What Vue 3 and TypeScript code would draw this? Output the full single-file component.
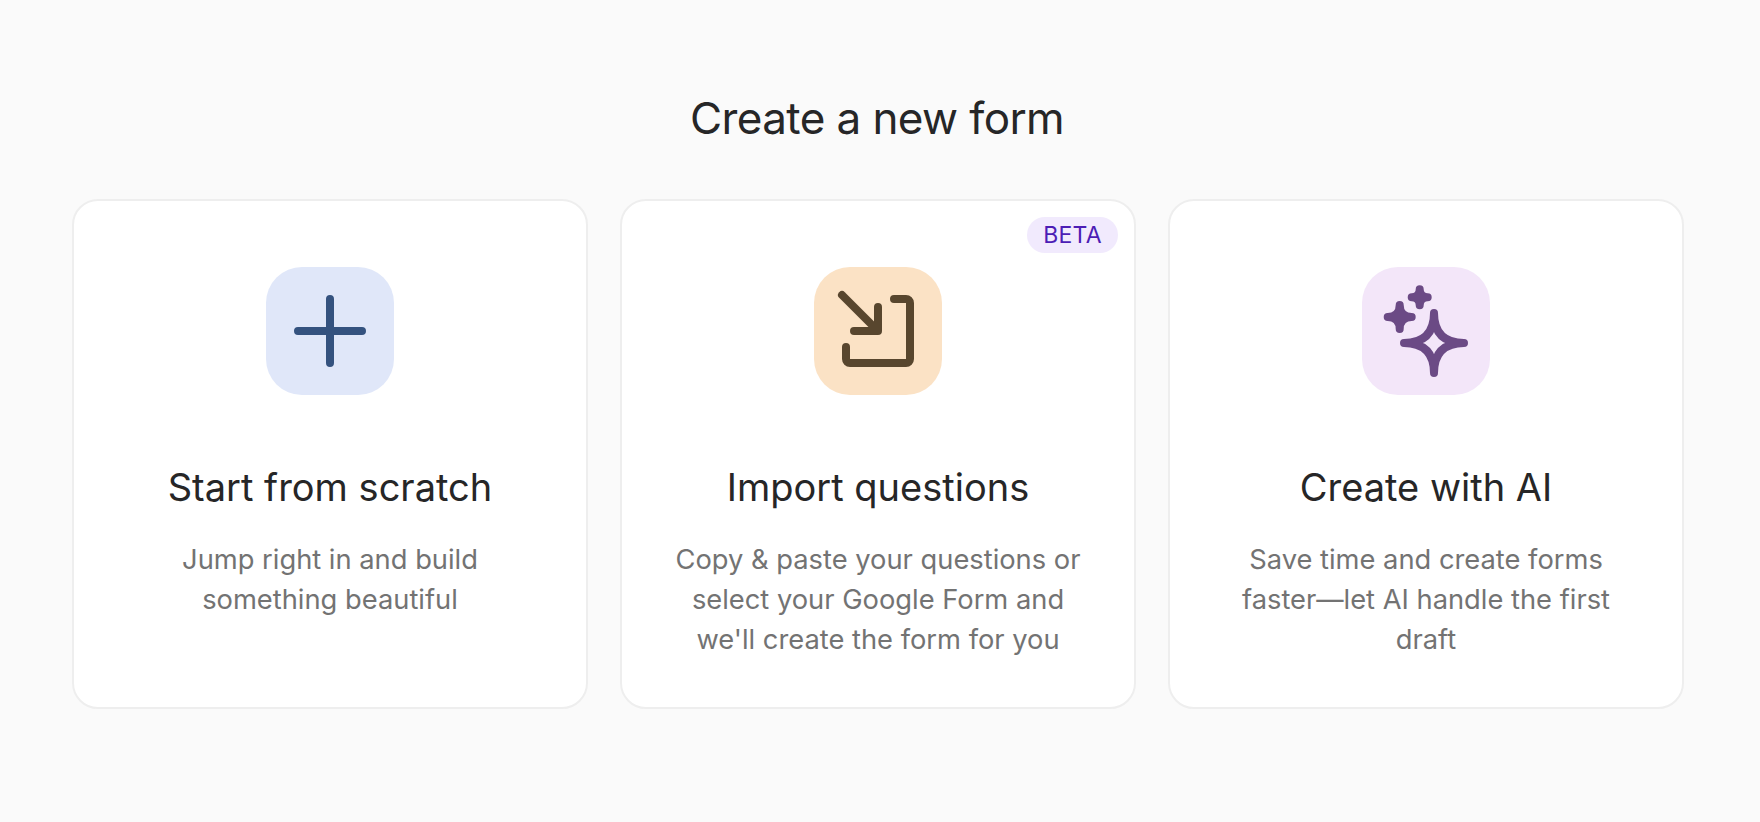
<script setup lang="ts">
interface Option {
  key: string
  title: string
  lines: string[]
  tone: string
  beta?: boolean
}

const options: Option[] = [
  { key: 'scratch', title: 'Start from scratch', lines: ['Jump right in and build', 'something beautiful'], tone: 'blue' },
  {
    key: 'import',
    title: 'Import questions',
    lines: ['Copy & paste your questions or', 'select your Google Form and', "we'll create the form for you"],
    tone: 'orange',
    beta: true,
  },
  { key: 'ai', title: 'Create with AI', lines: ['Save time and create forms', 'faster—let AI handle the first', 'draft'], tone: 'purple' },
]
</script>

<template>
  <main class="page">
    <h1 class="heading">Create a new form</h1>
    <section class="cards">
      <article v-for="o in options" :key="o.key" class="card">
        <span v-if="o.beta" class="badge">BETA</span>
        <div class="tile" :class="o.tone">
          <svg v-if="o.key === 'scratch'" viewBox="0 0 128 128" class="glyph" fill="none" stroke="currentColor" stroke-width="8" stroke-linecap="round">
            <path d="M32 64H96M64 32V96" />
          </svg>
          <svg v-else-if="o.key === 'import'" viewBox="0 0 128 128" class="glyph" fill="none" stroke="currentColor" stroke-width="8" stroke-linecap="round" stroke-linejoin="round">
            <path d="M28 28L62 62" />
            <path d="M64 40V64H40" />
            <path d="M80 32H92a4 4 0 0 1 4 4V92a4 4 0 0 1-4 4H36a4 4 0 0 1-4-4V80" />
          </svg>
          <svg v-else viewBox="0 0 128 128" class="glyph" stroke="currentColor" stroke-width="8" stroke-linecap="round" stroke-linejoin="round">
            <path fill="none" d="M72 46C72 66 82 76 102 76C82 76 72 86 72 106C72 86 62 76 42 76C62 76 72 66 72 46Z" />
            <path fill="currentColor" d="M37.7 38C37.7 46 41.7 50 49.7 50C41.7 50 37.7 54 37.7 62C37.7 54 33.7 50 25.7 50C33.7 50 37.7 46 37.7 38Z" />
            <path fill="currentColor" d="M57.7 22.3C57.7 27.5 60.5 30.3 65.7 30.3C60.5 30.3 57.7 33.1 57.7 38.3C57.7 33.1 54.9 30.3 49.7 30.3C54.9 30.3 57.7 27.5 57.7 22.3Z" />
          </svg>
        </div>
        <h2 class="title">{{ o.title }}</h2>
        <p class="desc">
          <span v-for="line in o.lines" :key="line" class="line">{{ line }}</span>
        </p>
      </article>
    </section>
  </main>
</template>

<style>
html,
body {
  margin: 0;
  background: #fafafa;
}
</style>

<style scoped>
.page {
  box-sizing: border-box;
  min-height: 822px;
  padding: 94px 76px 0 72px;
  background: #fafafa;
  font-family: Inter, "Liberation Sans", sans-serif;
}

.heading {
  margin: 0 0 57px;
  padding-right: 2px;
  height: 48px;
  line-height: 48px;
  font-size: 44px;
  letter-spacing: -0.6px;
  font-weight: 400;
  color: #262627;
  text-align: center;
}

.cards {
  display: grid;
  grid-template-columns: repeat(3, 1fr);
  gap: 32px;
}

.card {
  position: relative;
  box-sizing: border-box;
  height: 510px;
  padding: 66px 32px 0;
  display: flex;
  flex-direction: column;
  align-items: center;
  background: #fff;
  border: 2px solid #eeeeee;
  border-radius: 26px;
}

.badge {
  position: absolute;
  top: 16px;
  right: 16px;
  box-sizing: border-box;
  width: 91px;
  height: 36px;
  line-height: 36px;
  text-align: center;
  border-radius: 18px;
  background: #f1eafd;
  color: #4c1db5;
  font-size: 23px;
  letter-spacing: 0.2px;
}

.tile {
  width: 128px;
  height: 128px;
  border-radius: 36px;
  flex: none;
}

.glyph {
  display: block;
  width: 128px;
  height: 128px;
}

.blue {
  background: #e0e7f9;
  color: #34527f;
}

.orange {
  background: #fbe2c5;
  color: #58462e;
}

.purple {
  background: #f3e6f9;
  color: #6b4a85;
}

.title {
  margin: 68px 0 0;
  line-height: 48px;
  font-size: 38px;
  font-weight: 400;
  color: #262627;
}

.desc {
  margin: 29px 0 0;
  font-size: 27.3px;
  line-height: 40px;
  color: #737373;
  text-align: center;
}

.line {
  display: block;
}
</style>
